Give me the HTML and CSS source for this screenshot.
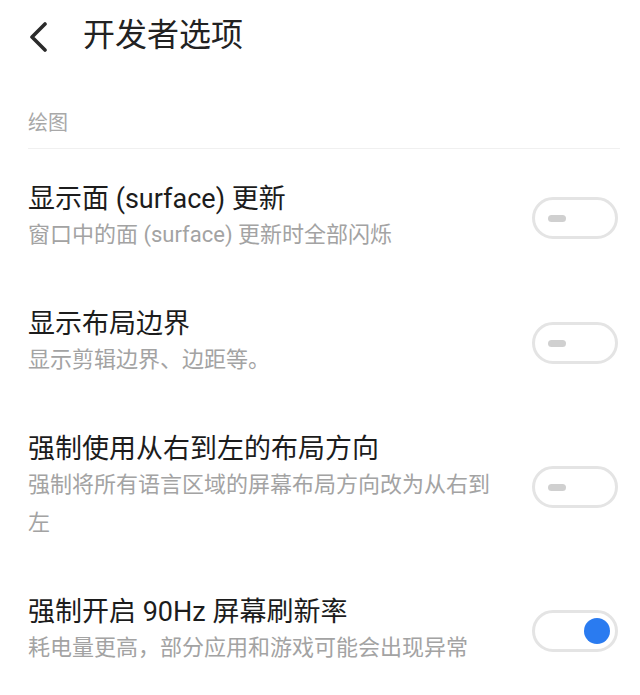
FILE: index.html
```html
<!DOCTYPE html>
<html lang="zh-CN">
<head>
<meta charset="utf-8">
<title>开发者选项</title>
<link rel="stylesheet" href="styles.css">
</head>
<body>
<div class="page">
  <header class="header">
    <svg class="back" width="20" height="30" viewBox="0 0 20 30" aria-hidden="true">
      <path d="M17 2 L4 15 L17 28" fill="none" stroke="#2b2b2b" stroke-width="3.6" stroke-linecap="round" stroke-linejoin="round"/>
    </svg>
    <h1 class="title">开发者选项</h1>
  </header>

  <div class="section-label">绘图</div>

  <ul class="list">
    <li class="item">
      <div class="text">
        <div class="item-title">显示面 (surface) 更新</div>
        <div class="item-sub">窗口中的面 (surface) 更新时全部闪烁</div>
      </div>
      <div class="toggle off"><span class="knob"></span></div>
    </li>
    <li class="item">
      <div class="text">
        <div class="item-title">显示布局边界</div>
        <div class="item-sub">显示剪辑边界、边距等。</div>
      </div>
      <div class="toggle off"><span class="knob"></span></div>
    </li>
    <li class="item">
      <div class="text">
        <div class="item-title">强制使用从右到左的布局方向</div>
        <div class="item-sub">强制将所有语言区域的屏幕布局方向改为从右到左</div>
      </div>
      <div class="toggle off"><span class="knob"></span></div>
    </li>
    <li class="item">
      <div class="text">
        <div class="item-title">强制开启 90Hz 屏幕刷新率</div>
        <div class="item-sub">耗电量更高，部分应用和游戏可能会出现异常</div>
      </div>
      <div class="toggle on"><span class="knob"></span></div>
    </li>
  </ul>
</div>
</body>
</html>
```

FILE: styles.css
```css
html, body {
  margin: 0;
  padding: 0;
  background: #ffffff;
}

body {
  font-family: Roboto, "Noto Sans CJK SC", "Noto Sans", sans-serif;
  color: #1f1f1f;
}

.page {
  width: 640px;
}

.header {
  display: flex;
  align-items: center;
  height: 70px;
  padding-left: 28px;
}

.back {
  display: block;
  flex: none;
  margin-top: 3px;
}

.title {
  margin: 0 0 0 35px;
  font-size: 32px;
  font-weight: 400;
  line-height: 40px;
  color: #222222;
}

.section-label {
  margin: 39px 20px 0 28px;
  padding-bottom: 11px;
  font-size: 20px;
  line-height: 28px;
  color: #a8a8a8;
  border-bottom: 1px solid #f0f0f0;
}

.list {
  list-style: none;
  margin: 6px 0 0;
  padding: 0;
}

.item {
  display: flex;
  align-items: center;
  padding: 27px 22px 26px 28px;
}

.text {
  flex: 1;
  min-width: 0;
  margin-right: 34px;
}

.item-title {
  font-size: 27px;
  line-height: 34px;
  color: #1c1c1c;
}

.item-sub {
  font-size: 22px;
  line-height: 38px;
  color: #a3a3a3;
}

.toggle {
  flex: none;
  box-sizing: border-box;
  width: 86px;
  height: 42px;
  border: 3px solid #e4e4e4;
  border-radius: 21px;
  background: #ffffff;
  display: flex;
  align-items: center;
}

.toggle.off {
  padding-left: 13px;
}

.toggle.off .knob {
  width: 18px;
  height: 7px;
  border-radius: 4px;
  background: #d0d0d0;
}

.toggle.on {
  justify-content: flex-end;
  padding-right: 5px;
}

.toggle.on .knob {
  width: 26px;
  height: 26px;
  border-radius: 50%;
  background: #2a7bf0;
}
```
